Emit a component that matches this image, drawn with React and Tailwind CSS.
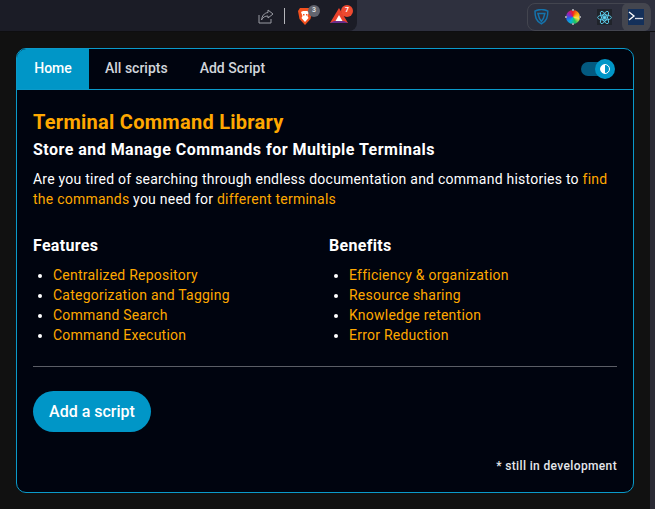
import { useState } from "react";

const features = ["Centralized Repository", "Categorization and Tagging", "Command Search", "Command Execution"];
const benefits = ["Efficiency & organization", "Resource sharing", "Knowledge retention", "Error Reduction"];

const BrowserBar = () => (
  <div className="flex h-[32px] items-start justify-between bg-[#2e303e] border-b border-[#0e0e10]">
    <div className="flex h-[31px] w-[357px] items-center rounded-br-lg bg-[#1b1c26] pl-[258px]">
      <svg width="16" height="16" viewBox="0 0 16 16" fill="none" stroke="#9a9ba3" strokeWidth="1">
        <path d="M1 7v8h12v-4" />
        <path d="M10 2l5 4-5 4V8C7 8 5 9 3.500 12 4 8 6 5 10 4.500z" />
      </svg>
      <div className="ml-[10px] h-[16px] w-px bg-[#b5b6bb]" />
      <div className="relative ml-[12px] h-[18px] w-[16px]">
        <svg width="16" height="18" viewBox="0 0 16 18">
          <path d="M3 1h10l2 3-1.500 8L8 18l-5.500-6L1 4z" fill="#f4511e" />
          <path d="M4 5l2-1h4l2 1-1.500 4 1 2L8 15l-3.500-4 1-2z" fill="#fff" />
          <path d="M6 7h1.500v1.500H6zM9 7h1.500v1.500H9z" fill="#f4511e" />
        </svg>
        <span className="absolute left-[11px] top-[-2px] flex h-[12px] w-[12px] items-center justify-center rounded-full bg-[#62646e] text-[7px] font-bold text-[#ddd]">3</span>
      </div>
      <div className="relative ml-[17px] h-[16px] w-[18px]">
        <svg width="18" height="16" viewBox="0 0 18 16">
          <path d="M9 0l9 15H0z" fill="#e8412b" />
          <path d="M0 15l4-2h10l4 2z" fill="#6b2d8b" />
          <path d="M9 7l3.500 6h-7z" fill="#fff" />
        </svg>
        <span className="absolute left-[11px] top-[-3px] flex h-[12px] w-[12px] items-center justify-center rounded-full bg-[#ee4a30] text-[7px] font-bold text-white">7</span>
      </div>
    </div>
    <div className="mt-[3px] mr-[4px] flex h-[28px] w-[124px] items-center rounded-lg border border-[#43454f] pl-[6px]">
      <svg width="15" height="16" viewBox="0 0 15 16" fill="none">
        <path d="M1 2c4-2 9-2 13 0 0 6-1 10-6.500 13C2 12 1 8 1 2z" stroke="#1473ac" strokeWidth="1.500" />
        <path d="M4 4.500h7l-1.500 5-2 3-2-3z" stroke="#1473ac" strokeWidth="1.500" />
      </svg>
      <div className="relative ml-[16px] h-[16px] w-[16px]">
        <div className="absolute inset-[1px] rounded-full bg-[conic-gradient(#ef2020,#f59e0b,#fde047,#22c55e,#06b6d4,#2563eb,#a21caf,#ef2020)]" />
        <div className="absolute top-0 left-[7px] h-[2px] w-[2px] bg-[#9a9ba3]" />
        <div className="absolute bottom-0 left-[7px] h-[2px] w-[2px] bg-[#9a9ba3]" />
        <div className="absolute top-[7px] left-0 h-[2px] w-[2px] bg-[#9a9ba3]" />
        <div className="absolute top-[7px] right-0 h-[2px] w-[2px] bg-[#9a9ba3]" />
      </div>
      <div className="ml-[16px] flex h-[16px] w-[16px] items-center justify-center bg-[#20232a]">
        <svg width="15" height="15" viewBox="-12 -12 24 24" fill="none" stroke="#61dafb" strokeWidth="1.400">
          <circle r="2.200" fill="#61dafb" />
          <ellipse rx="11" ry="4.200" />
          <ellipse rx="11" ry="4.200" transform="rotate(60)" />
          <ellipse rx="11" ry="4.200" transform="rotate(120)" />
        </svg>
      </div>
      <div className="ml-[10px] flex h-[28px] w-[28px] items-center justify-center rounded-md bg-[#44464f]">
        <svg width="16" height="16" viewBox="0 0 16 16" fill="none" className="bg-[#14305a]">
          <path d="M1 3l5 4-5 4" stroke="#fff" strokeWidth="1.300" />
          <path d="M7 9.500h8" stroke="#d5d8e0" strokeWidth="1.300" />
        </svg>
      </div>
    </div>
  </div>
);

const ListColumn = ({ title, items, className }) => (
  <div className={className}>
    <h3 className="text-[16px] leading-[24px] font-bold tracking-[0.3px] text-white">{title}</h3>
    <ul className="mt-[7px] list-disc pl-[20px] text-[14px] leading-[20px] tracking-[0.23px] text-[#ffa800] marker:text-white">
      {items.map((item) => (
        <li key={item}>{item}</li>
      ))}
    </ul>
  </div>
);

export default function App() {
  const [tab, setTab] = useState("Home");

  return (
    <div className="h-[509px] w-[655px] overflow-hidden bg-[#111111] font-['Roboto',sans-serif]">
      <BrowserBar />
      <div className="flex h-[477px]">
        <div className="w-[650px] px-[16px] pt-[16px]">
          <div className="h-[445px] w-[618px] overflow-hidden rounded-[10px] border border-[#0a9aca] bg-[#00040f]">
            <div className="flex h-[41px] items-center border-b border-[#0a9aca]">
              {["Home", "All scripts", "Add Script"].map((name) => (
                <button
                  key={name}
                  onClick={() => setTab(name)}
                  className={`h-full px-[16px] pb-[2px] text-[14px] font-medium ${
                    tab === name ? "w-[72px] bg-[#0096c7] text-white" : "text-[#d1d5db]"
                  }`}
                >
                  {name}
                </button>
              ))}
              <div className="relative mr-[20px] ml-auto h-[14px] w-[32px] rounded-full bg-[#035a80]">
                <div className="absolute top-[-3px] right-[-2px] flex h-[20px] w-[20px] items-center justify-center rounded-full bg-[#0096c7]">
                  <div className="h-[10px] w-[10px] rounded-full border border-white bg-[linear-gradient(90deg,#fff_50%,#0096c7_50%)]" />
                </div>
              </div>
            </div>
            <div className="px-[16px] pt-[20px]">
              <h1 className="text-[20px] leading-[24px] font-bold tracking-[0.27px] text-[#ffa800]">Terminal Command Library</h1>
              <h2 className="mt-[4px] text-[16px] leading-[24px] font-bold tracking-[0.47px] text-white">Store and Manage Commands for Multiple Terminals</h2>
              <p className="mt-[7px] text-[14px] leading-[20px] tracking-[0.24px] text-white">
                Are you tired of searching through endless documentation and command histories to{" "}
                <span className="text-[#ffa800]">find the commands</span> you need for{" "}
                <span className="text-[#ffa800]">different terminals</span>
              </p>
              <div className="mt-[25px] flex">
                <ListColumn title="Features" items={features} className="w-[296px]" />
                <ListColumn title="Benefits" items={benefits} className="flex-1" />
              </div>
              <div className="mt-[21px] h-px bg-[#5b5e66]" />
              <button className="mt-[24px] h-[41px] w-[118px] rounded-full bg-[#0096c7] text-[16px] font-medium text-white">Add a script</button>
              <p className="mt-[26px] text-right text-[12px] leading-[16px] font-medium tracking-[0.36px] text-[#e5e7eb]">* still in development</p>
            </div>
          </div>
        </div>
        <div className="w-[5px] bg-[#2b2b35]" />
      </div>
    </div>
  );
}
